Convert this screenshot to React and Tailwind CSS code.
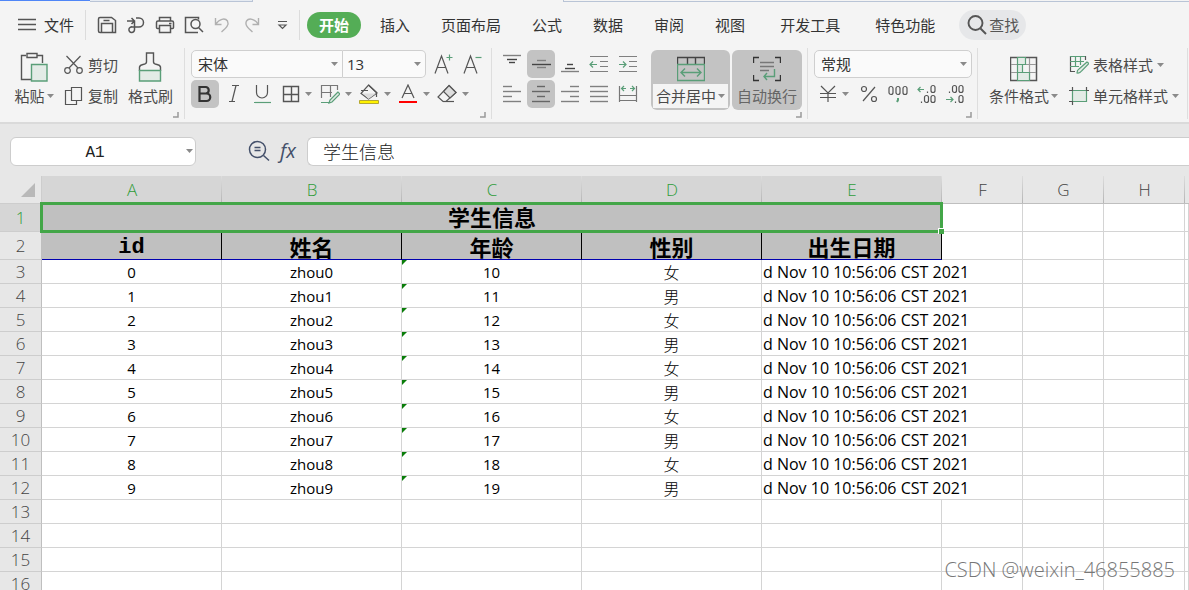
import React from 'react';

const UI = "font-['Open_Sans','Noto_Sans_CJK_SC',sans-serif]";
const G = '#5a9e78';
const K = '#555';

function Ic({ w, h, children, sw = 1.2, stroke = K, className = '' }) {
  return (
    <svg aria-hidden="true" width={w} height={h} viewBox={`0 0 ${w} ${h}`} fill="none" stroke={stroke} strokeWidth={sw} className={`shrink-0 ${className}`}>
      {children}
    </svg>
  );
}

function Caret({ className = '' }) {
  return (
    <svg aria-hidden="true" width="7" height="4" viewBox="0 0 7 4" className={`shrink-0 ${className}`}>
      <path d="M0 0H7L3.5 4Z" fill="#8a8a8a" />
    </svg>
  );
}

function Launcher() {
  return (
    <button aria-label="更多设置" className="absolute right-[5px] bottom-px flex">
      <Ic w={6} h={6} stroke="#999" sw={1.5}><path d="M5 0V5H0" /></Ic>
    </button>
  );
}

function Tool({ label, active, caret, children }) {
  return (
    <button
      aria-label={label}
      title={label}
      className={`flex h-7 shrink-0 items-center justify-center rounded-[5px] ${caret ? 'w-[39px] gap-[5px]' : 'w-7'} ${active ? 'bg-[#c3c3c3]' : ''}`}
    >
      {children}
      {caret && <Caret />}
    </button>
  );
}

function Picker({ label, value, className }) {
  return (
    <label className={`relative flex h-7 items-center border-[#cfcfcf] bg-[#fafafa] ${className}`}>
      <select aria-label={label} defaultValue={value} className="h-full w-full appearance-none bg-transparent px-1.5 text-[15px] text-[#333] outline-none">
        <option>{value}</option>
      </select>
      <Caret className="pointer-events-none absolute right-1" />
    </label>
  );
}

function Lines({ rows }) {
  return (
    <Ic w={20} h={20} sw={1.4}>
      {rows.map(([x1, x2, y, c]) => (
        <path key={y} d={`M${x1} ${y}.5H${x2}`} stroke={c || '#808080'} />
      ))}
    </Ic>
  );
}

const tabs = ['插入', '页面布局', '公式', '数据', '审阅', '视图'];

function MenuBar() {
  return (
    <nav className="flex h-[46px] items-center text-[15px] whitespace-nowrap text-[#333]">
      <button className="ml-[18px] flex items-center gap-2">
        <Ic w={18} h={14} sw={1.5}><path d="M0 1.5H18M0 6.5H18M0 11.5H18" /></Ic>
        文件
      </button>
      <div className="ml-[11px] h-[30px] w-px bg-[#dcdcdc]" />
      <div className="ml-[11px] flex items-center gap-[9px]">
        <button aria-label="保存"><Ic w={20} h={20} sw={1.5}><path d="M3 2.5H14.5L18.5 5.500V17.5H3Q1.500 17.5 1.500 16V4Q1.500 2.5 3 2.5ZM4.5 17V8.5H15.500V17M6.500 5.5H12.500" /></Ic></button>
        <button aria-label="输出"><Ic w={20} h={20} sw={1.5}><path d="M1 6H8M5.500 3L8.500 6L5.500 9M10 3H13A4.500 4.500 0 0 1 13 12H6.500A2.800 2.800 0 1 0 8.500 14.500V6" /></Ic></button>
        <button aria-label="打印"><Ic w={20} h={20} sw={1.5}><path d="M4.5 6V2.5H15.500V6M5 13.5H2.500Q1.500 13.5 1.500 12.5V7.500Q1.500 6 3 6H17Q18.500 6 18.500 7.500V12.5Q18.500 13.5 17.500 13.5H15M4.5 10.5H15.5V17.500H4.5ZM14 8.500H16.5" /></Ic></button>
        <button aria-label="打印预览"><Ic w={20} h={20} sw={1.5}><path d="M14 17.500H1.500V2.5H14.5V4.5" /><circle cx="11.500" cy="9" r="4.500" /><path d="M14.500 12.500L19 17" /></Ic></button>
        <button aria-label="撤销" disabled><Ic w={20} h={20} sw={1.4} stroke="#b0b0b0"><path d="M2.5 3V9.500H8.500M3 9C6 4 12 2.5 14.500 6C16.5 10 13 13 8.500 17" /></Ic></button>
        <button aria-label="恢复" disabled><Ic w={20} h={20} sw={1.4} stroke="#b0b0b0"><path d="M16.5 3V9.500H10.500M16 9C13 4 7 2.5 4.500 6C2.500 10 6 13 10.500 17" /></Ic></button>
        <button aria-label="自定义快速访问工具栏" className="ml-1.5"><Ic w={11} h={10}><path d="M1 1.500H10M2 5H9L5.500 8.500Z" /></Ic></button>
      </div>
      <div className="ml-[11px] h-[30px] w-px bg-[#dcdcdc]" />
      <button className="ml-[7px] h-[26px] rounded-full bg-[#54ad56] px-3 font-bold text-white">开始</button>
      <div className="ml-[19px] flex gap-[31px]">
        {tabs.map((t) => <button key={t}>{t}</button>)}
      </div>
      <button className="ml-[35px]">开发工具</button>
      <button className="ml-[35px]">特色功能</button>
      <button className="ml-6 flex h-[30px] items-center gap-0.5 rounded-full bg-[#e6e7e9] pr-[7px] pl-2 text-[#555]">
        <Ic w={20} h={20} sw={1.9}><circle cx="8.500" cy="8" r="7" /><path d="M13.500 13.500L19 19" /></Ic>
        查找
      </button>
    </nav>
  );
}

function ClipboardGroup() {
  return (
    <section className="relative flex h-[71px] w-[185px] shrink-0 border-r border-[#dedede] pt-1 pl-3">
      <button className="flex w-11 flex-col items-center">
        <Ic w={28} h={30} sw={1.4}>
          <path d="M6 3.5H1.5V27.5H11M17 3.5H22.5V11" /><path d="M7 1.500H17V5.5H7Z" />
          <path d="M11.5 12.500H27V29H11.5Z" stroke={G} fill="#e3ebe6" />
        </Ic>
        <span className="mt-1 flex items-center gap-0.5 leading-5">粘贴<Caret /></span>
      </button>
      <div className="-mt-px ml-2 flex flex-col gap-[3px]">
        <button className="flex h-7 items-center gap-1">
          <Ic w={20} h={20}><circle cx="3.500" cy="15.500" r="2.800" /><circle cx="15.500" cy="15.500" r="2.800" /><path d="M2.500 1L14 13M16.500 1L5 13" /></Ic>
          剪切
        </button>
        <button className="flex h-7 items-center gap-1">
          <Ic w={20} h={20}><path d="M7.5 1.500H17.5V14.5H7.5Z" /><path d="M7 4.500H1.5V18.500H12.5V15" /></Ic>
          复制
        </button>
      </div>
      <button className="ml-2.5 flex w-[45px] flex-col items-center">
        <Ic w={24} h={30} sw={1.4} className="mr-px">
          <path d="M1.500 19V15Q2 13 5 12.500Q8.5 12 8.5 10V1H15.500V10Q15.500 12 19 12.500Q22 13 22.500 15V19" />
          <path d="M1.500 18.500H22.500V29H1.500Z" stroke={G} fill="#e3ebe6" />
        </Ic>
        <span className="mt-1 leading-5">格式刷</span>
      </button>
      <Launcher />
    </section>
  );
}

function FontGroup() {
  return (
    <section className="relative flex h-[71px] w-[307px] shrink-0 flex-col gap-0.5 border-r border-[#dedede] pt-0.5 pl-1.5">
      <div className="flex items-center">
        <Picker label="字体" value="宋体" className="w-[152px] rounded-l-[5px] border" />
        <Picker label="字号" value="13" className="w-[83px] rounded-r-[5px] border border-l-0 [&>select]:px-1" />
        <button aria-label="增大字号" className="ml-2 flex"><Ic w={20} h={22}><path d="M1 20.500L7.500 3L14 20.500M3.500 14.500H11.500" /><path d="M12.500 4.500H18.500M15.500 1.500V7.500" stroke={G} /></Ic></button>
        <button aria-label="减小字号" className="ml-[9px] flex"><Ic w={20} h={22}><path d="M1 20.500L7.500 3L14 20.500M3.500 14.500H11.500" /><path d="M12.500 4.500H18.500" stroke={G} /></Ic></button>
      </div>
      <div className="flex items-center">
        <Tool label="加粗" active><Ic w={16} h={18} sw={2.2} stroke="#333"><path d="M2.500 2H9A3.300 3.300 0 0 1 9 8.500H2.500ZM2.500 8.500H9.500A3.700 3.700 0 0 1 9.500 16H2.500Z" /></Ic></Tool>
        <div className="ml-px flex">
          <Tool label="倾斜"><Ic w={12} h={18}><path d="M4 .5H11M1 16.5H7M8 .5L4 16.5" /></Ic></Tool>
          <Tool label="下划线"><Ic w={18} h={20}><path d="M3.500 1V8.500A5.500 5.500 0 0 0 14.500 8.500V1" /><path d="M1 18.500H18" stroke={G} /></Ic></Tool>
        </div>
        <div className="ml-px flex">
          <Tool label="边框" caret><Ic w={18} h={18} sw={1.4}><path d="M1.500 1.500H16.500V16.500H1.500ZM9.5 1.500V16.500M1.500 9.500H16.500" /></Ic></Tool>
          <Tool label="绘图边框" caret><Ic w={20} h={20}><path d="M1.500 14V1.5H17.500V6M10.5 2V13M1.500 8.5H12" stroke="#777" /><path d="M1 18.5H9M18 8L10 16L9 19L12 18L20 10Z" stroke={G} fill="#e3ebe6" /></Ic></Tool>
          <Tool label="填充颜色" caret><Ic w={20} h={20}><path d="M9.500 1L18 9L9.500 15L2 9.500Z" fill="#f4f4f4" /><path d="M4 9.5H17L9.500 15Z" fill="#dcdcdc" stroke="none" /><path d="M2 6.5H9M9.5 1L17.500 8.500V13" /><path d="M.5 16.500H19.500V19.500H.5Z" fill="#fff200" stroke="#b5a832" strokeWidth="1" /></Ic></Tool>
          <Tool label="字体颜色" caret><Ic w={20} h={20}><path d="M4 14L10 1L16 14M6 9.5H14" /><path d="M1 18H19" stroke="#f00" strokeWidth="2" /></Ic></Tool>
          <Tool label="清除" caret><Ic w={20} h={20}><path d="M12 1.500L19 8.500L9 17.5H6L1 13Z" /><path d="M12 1.500L19 8.500L13 14L6.500 7.500Z" fill="#ddd" /><path d="M6 17.500H17" /></Ic></Tool>
        </div>
      </div>
      <Launcher />
    </section>
  );
}

const D = '#444';
function AlignGroup() {
  return (
    <section className="relative flex h-[71px] w-[316px] shrink-0 border-r border-[#dedede] pt-0.5 pl-1.5">
      <div className="grid h-[58px] w-[145px] grid-cols-5 gap-y-0.5">
        <Tool label="顶端对齐"><Lines rows={[[1, 19, 1], [5, 15, 5, D], [7, 13, 8, D]]} /></Tool>
        <Tool label="垂直居中" active><Lines rows={[[6, 15, 6], [1, 20, 10, D], [6, 15, 13]]} /></Tool>
        <Tool label="底端对齐"><Lines rows={[[7, 13, 10, D], [5, 15, 14, D], [1, 19, 17]]} /></Tool>
        <Tool label="减少缩进量"><Ic w={20} h={20}><path d="M1 2.500H19M11 7.500H19M11 12.500H19M1 17.500H19" stroke="#808080" /><path d="M8 10.5H1M4 7.5L1 10.5L4 13.5" stroke={G} /></Ic></Tool>
        <Tool label="增加缩进量"><Ic w={20} h={20}><path d="M1 2.500H19M11 7.500H19M11 12.500H19M1 17.500H19" stroke="#808080" /><path d="M1 10.5H8M5 7.5L8 10.5L5 13.5" stroke={G} /></Ic></Tool>
        <Tool label="左对齐"><Lines rows={[[1, 10, 2], [1, 19, 7], [1, 10, 12], [1, 19, 17]]} /></Tool>
        <Tool label="水平居中" active><Lines rows={[[6, 14, 2, '#666'], [1, 19, 7, '#666'], [6, 14, 12, '#666'], [1, 19, 17, '#666']]} /></Tool>
        <Tool label="右对齐"><Lines rows={[[10, 19, 2], [1, 19, 7], [10, 19, 12], [1, 19, 17]]} /></Tool>
        <Tool label="两端对齐"><Lines rows={[[1, 19, 2], [1, 19, 7], [1, 19, 12], [1, 19, 17]]} /></Tool>
        <Tool label="分散对齐"><Ic w={20} h={20}><path d="M1.500 2V18M18.500 2V18M2 11.500H18M2 16.500H18" stroke="#777" /><path d="M3 4.500H8M6 2L3.500 4.500L6 7M17 4.500H12M14 2L16.500 4.500L14 7" stroke={G} /></Ic></Tool>
      </div>
      <div className="ml-2 flex h-[60px] gap-0.5">
        <button className="flex w-[79px] flex-col items-center overflow-hidden rounded-md bg-[#c3c3c3] pt-1.5 pb-0.5">
          <Ic w={28} h={26} sw={1.4}>
            <path d="M.5 8V1.5H27.500V8M10.5 1V8M18.500 1V8" stroke="#444" />
            <path d="M.5 8.5H27.500V24.500H.5Z" stroke={G} /><path d="M4 16.5H24M8 12.5L4 16.5L8 20.5M20 12.500L24 16.5L20 20.5" stroke={G} />
          </Ic>
          <span className="mt-0.5 flex h-6 w-[75px] items-center justify-center gap-0.5 bg-[#f4f4f4]">合并居中<Caret /></span>
        </button>
        <button className="flex w-[70px] flex-col items-center rounded-md bg-[#c3c3c3] pt-1.5">
          <Ic w={28} h={26} sw={1.4}>
            <path d="M6 1.5H.5V7M22 1.5H27.500V7M.5 19V24.500H6M27.500 19V24.500H22" stroke="#333" />
            <path d="M7 6.5H21M7 10.5H21M7 14.500H16" stroke="#777" /><path d="M21.500 13V20.500H11M14 17L11 20.500L14 24" stroke={G} />
          </Ic>
          <span className="mt-0.5 leading-6 text-[#666]">自动换行</span>
        </button>
      </div>
      <Launcher />
    </section>
  );
}

function NumberGroup() {
  return (
    <section className="relative flex h-[71px] w-[170px] shrink-0 flex-col gap-0.5 border-r border-[#dedede] pt-0.5 pl-1.5">
      <Picker label="数字格式" value="常规" className="w-[158px] rounded-[5px] border" />
      <div className="flex h-7 items-center">
        <Tool label="货币" caret><Ic w={18} h={18}><path d="M2 1L9 8L16 1M9 8V17M1 8.500H17M1 12.500H17" /></Ic></Tool>
        <button aria-label="百分比" className="ml-[7px] flex"><Ic w={18} h={18}><circle cx="4" cy="4" r="2.500" /><circle cx="14" cy="14" r="2.500" /><path d="M15 2L3 16" /></Ic></button>
        <button aria-label="千位分隔" className="ml-2.5 flex">
          <Ic w={20} h={18}><rect x="1" y="1.500" width="4" height="8" rx="2" /><rect x="8" y="1.500" width="4" height="8" rx="2" /><rect x="15" y="1.500" width="4" height="8" rx="2" /><path d="M10 13V15L9 17" stroke={G} strokeWidth="2" /></Ic>
        </button>
        <button aria-label="增加小数位" className="ml-[9px] flex">
          <Ic w={20} h={20}><path d="M7 5.5H1M3.500 3L1 5.5L3.500 8" stroke={G} /><rect x="14" y="1.500" width="4" height="7" rx="2" /><rect x="7.500" y="11.500" width="4" height="7" rx="2" /><rect x="14" y="11.500" width="4" height="7" rx="2" /><path d="M10.500 7.500V9M4.500 17.500V19" /></Ic>
        </button>
        <button aria-label="减少小数位" className="ml-2 flex">
          <Ic w={20} h={20}><path d="M1 15.5H8M5.500 13L8 15.5L5.500 18" stroke={G} /><rect x="7.500" y="1.500" width="4" height="7" rx="2" /><rect x="14" y="1.500" width="4" height="7" rx="2" /><rect x="14" y="11.500" width="4" height="7" rx="2" /><path d="M4.500 7.500V9M10.500 17.500V19" /></Ic>
        </button>
      </div>
      <Launcher />
    </section>
  );
}

function StyleGroup() {
  return (
    <section className="flex h-[71px] w-[210px] shrink-0 border-r border-[#dedede] pt-[3px] pl-[11px]">
      <button className="flex flex-col items-center pt-1">
        <Ic w={28} h={28}>
          <path d="M.5 2.500H26.500V25.500H.5Z" strokeWidth="1.500" />
          <path d="M1 9.500H26M1 17.500H26M19.500 3V25" stroke="#999" />
          <path d="M7.500 2.500H15.500V9.500H7.500ZM7.500 9.500H12.500V17.500H7.500ZM7.500 17.500H19.500V25.500H7.500Z" stroke={G} fill="#e3ebe6" />
        </Ic>
        <span className="mt-[3px] flex items-center gap-0.5 leading-5">条件格式<Caret /></span>
      </button>
      <div className="ml-[11px] flex flex-col gap-[3px]">
        <button className="flex h-7 items-center gap-1">
          <Ic w={20} h={20}><path d="M1.500 1V16.500H6M16.500 1V5" /><path d="M1 1.500H16M1 6.500H15M1 11.500H10M6.500 1V12M11.500 1V10" stroke={G} /><path d="M18 7L10 14Q8 15 8 18Q11 18.500 12.500 16L20 8.500Z" stroke={G} fill="#e3ebe6" /></Ic>
          表格样式<Caret />
        </button>
        <button className="flex h-7 items-center gap-1">
          <Ic w={20} h={20}><path d="M3.500 4.500H17.500V15.500H3.500Z" stroke={G} fill="#e3ebe6" /><path d="M0 4.500H4M17 4.500H20M0 15.500H4M3.500 1V4.500M3.500 15.500V19M17.500 1V4.500" /></Ic>
          单元格样式<Caret />
        </button>
      </div>
    </section>
  );
}

function FormulaBar() {
  return (
    <div className="flex h-[52px] items-center bg-[#e7e7e7] pt-0.5 pl-2.5 text-[#222]">
      <label className="relative flex h-[29px] w-[186px] items-center rounded-md border border-[#cdcdcd] bg-white">
        <input aria-label="名称框" defaultValue="A1" className="w-full bg-transparent pt-1 pr-4 text-center font-['Liberation_Mono',monospace] text-base outline-none" />
        <Caret className="pointer-events-none absolute right-0.5" />
      </label>
      <button aria-label="浏览公式" className="ml-[52px] flex"><Ic w={22} h={22} sw={1.5} stroke="#44506a"><circle cx="9.500" cy="9.500" r="8" /><path d="M15.500 15.500L21 20.500M6.500 7.500H12.500M6.500 10.500H12.500" /></Ic></button>
      <button aria-label="插入函数" className="ml-2 w-5 text-xl leading-6 text-[#44506a] italic">fx</button>
      <input aria-label="编辑栏" defaultValue="学生信息" className="ml-[9px] h-[29px] min-w-0 flex-1 rounded-l-md border border-r-0 border-[#cdcdcd] bg-white px-[15px] font-['Noto_Sans_CJK_SC',sans-serif] text-lg leading-6 font-light outline-none" />
    </div>
  );
}

const letters = ['A', 'B', 'C', 'D', 'E', 'F', 'G', 'H'];
const heads = ['id', '姓名', '年龄', '性别', '出生日期'];
const students = Array.from({ length: 10 }, (_, i) => ({ id: i, name: `zhou${i}`, age: 10 + i, sex: i % 2 ? '男' : '女' }));
const line = 'border-r border-b border-[#d4d4d4]';
const rowHead = 'border-r border-b border-[#bfbfbf] border-b-[#cdcdcd] p-0 text-center text-[17px] leading-5 font-light';

function Blanks({ n }) {
  return Array.from({ length: n }, (_, i) => <td key={i} className={line} />);
}

function Sheet() {
  return (
    <table className="w-full table-fixed border-separate border-spacing-0 text-center">
      <colgroup>
        <col className="w-[42px]" />
        {heads.map((h) => <col key={h} className="w-[180px]" />)}
        <col className="w-[81px]" /><col className="w-[81px]" /><col className="w-[81px]" /><col />
      </colgroup>
      <thead>
        <tr className="h-7 text-[17px] leading-5">
          <th aria-label="全选" className="border-r border-b border-[#cdcdcd] bg-[#e7e7e7] p-0">
            <Ic w={14} h={14} stroke="none" className="ml-auto mr-1.5"><path d="M14 0V14H0Z" fill="#b9b9b9" /></Ic>
          </th>
          {letters.map((l, i) => (
            <th key={l} scope="col" className={`border-b border-[#bfbfbf] bg-[linear-gradient(to_bottom,#dddddd,#b5b5b5)] bg-[length:1px_100%] bg-right bg-no-repeat p-0 font-light ${i < 5 ? 'bg-[#d6d6d6] text-[#2f9c39]' : 'bg-[#e7e7e7] text-[#444]'}`}>{l}</th>
          ))}
          <th className="border-b border-[#bfbfbf] bg-[#e7e7e7] p-0" />
        </tr>
      </thead>
      <tbody className="text-[15px] leading-5 text-black">
        <tr className="h-7">
          <th scope="row" className={`${rowHead} bg-[#d6d6d6] text-[#2f9c39]`}>1</th>
          <td colSpan={5} className="relative bg-[#c0c0c0] p-0 pb-1 font-['Noto_Sans_CJK_SC',sans-serif] text-[22px] leading-6 font-bold">
            学生信息
            <span className="pointer-events-none absolute -top-0.5 -right-px -bottom-px -left-0.5 border-[3px] border-[#43a648]" />
            <span className="pointer-events-none absolute -right-0.5 -bottom-0.5 size-[6px] border-t border-l border-white bg-[#43a648]" />
          </td>
          <Blanks n={4} />
        </tr>
        <tr className="h-7">
          <th scope="row" className={`${rowHead} bg-[#e7e7e7] text-[#444]`}>2</th>
          {heads.map((h) => (
            <th key={h} scope="col" className={`border-r border-b border-black border-b-[#0000b0] bg-[#c0c0c0] p-0 text-[22px] font-bold ${h === 'id' ? "pt-1 font-['Liberation_Mono',monospace] leading-5" : "font-['Noto_Sans_CJK_SC',sans-serif] leading-6"}`}>{h}</th>
          ))}
          <Blanks n={4} />
        </tr>
        {students.map((s) => (
          <tr key={s.id} className="h-6">
            <th scope="row" className={`${rowHead} bg-[#e7e7e7] text-[#444]`}>{s.id + 3}</th>
            <td className={`${line} p-0`}>{s.id}</td>
            <td className={`${line} p-0`}>{s.name}</td>
            <td className={`${line} relative p-0`}>
              {s.age}
              <svg aria-hidden="true" width="5" height="5" className="absolute top-0 left-0"><path d="M0 0H5L0 5Z" fill="#0a7d0a" /></svg>
            </td>
            <td className={`${line} p-0 font-['Noto_Sans_CJK_SC',sans-serif] text-base leading-5 font-light`}>{s.sex}</td>
            <td className="border-b border-[#d4d4d4] p-0 pl-px text-left text-base leading-5 whitespace-nowrap">d Nov 10 10:56:06 CST 2021</td>
            <Blanks n={4} />
          </tr>
        ))}
        {[13, 14, 15, 16].map((n) => (
          <tr key={n} className="h-6">
            <th scope="row" className={`${rowHead} bg-[#e7e7e7] text-[#444]`}>{n}</th>
            <Blanks n={9} />
          </tr>
        ))}
      </tbody>
    </table>
  );
}

export default function App() {
  return (
    <div className={`relative h-screen overflow-hidden bg-white ${UI}`}>
      <header className="border-b-2 border-[#dadada] bg-[#f4f4f4]">
        <div className="flex h-0.5">
          <div className="h-px w-[90px] bg-[#4f86f7]" />
          <div className="w-[163px] border-r border-b border-[#b9c4d6] bg-[#e6ebf2]" />
          <div className="ml-[310px] flex-1 border-b border-l border-[#b9c4d6]" />
        </div>
        <MenuBar />
        <div className="flex h-[74px] text-[15px] whitespace-nowrap text-[#4a4a4a]">
          <ClipboardGroup />
          <FontGroup />
          <AlignGroup />
          <NumberGroup />
          <StyleGroup />
        </div>
      </header>
      <FormulaBar />
      <Sheet />
      <div className="absolute right-3.5 bottom-2 text-xl leading-6 font-light text-[#777]">CSDN @weixin_46855885</div>
    </div>
  );
}
